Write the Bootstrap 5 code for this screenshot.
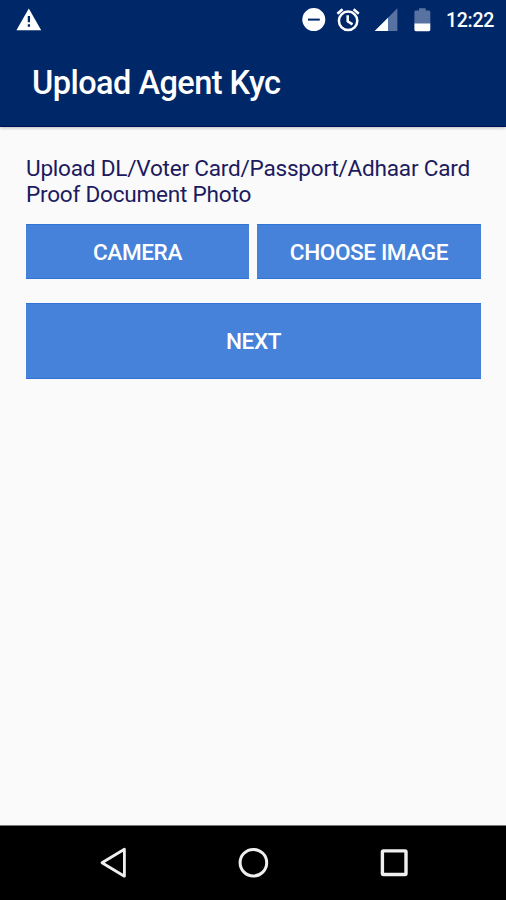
<!DOCTYPE html>
<html lang="en">
<head>
<meta charset="utf-8">
<meta name="viewport" content="width=device-width, initial-scale=1">
<title>Upload Agent Kyc</title>
<link href="https://cdn.jsdelivr.net/npm/bootstrap@5.3.0/dist/css/bootstrap.min.css" rel="stylesheet">
<style>
body { font-family: Roboto, "Liberation Sans", sans-serif; background: #fafafa; }
.screen { height: 900px; overflow: hidden; }
.app-header { background: #002868; height: 127px; border-bottom: 1px solid #00125a; box-shadow: 0 1px 3px rgba(0,0,0,.25); }
.status-bar { height: 40px; padding: 0 12px 0 16px; }
.status-bar svg, .system-nav svg { display: block; }
.clock { font-size: 19.5px; font-weight: 500; line-height: 40px; width: 48px; padding-top: 1px; letter-spacing: -.3px; white-space: nowrap; }
.app-title { font-size: 32.5px; font-weight: 500; line-height: 40px; padding: 23px 0 0 32px; letter-spacing: -.54px; white-space: nowrap; }
.content { padding: 29px 25px 0 26px; }
.prompt { color: #1d1a60; font-size: 22.6px; line-height: 26px; margin-bottom: 16px; letter-spacing: -.24px; white-space: nowrap; }
.action { background: #4682d9; color: #fff; font-size: 22.6px; font-weight: 500; line-height: 1; letter-spacing: -.42px; height: 55px; padding: 3px 0 0; border: 0; border-top: 1px solid #2f74d4; border-bottom: 1px solid #2f74d4; }
.action:hover { background: #3a74c9; color: #fff; }
.pair { gap: 8px; }
.pair .action:first-child { flex: 0 0 223px; }
.action-next { height: 76px; margin-top: 24px; }
.system-nav { height: 75px; border-top: 1px solid #777; background: #000; padding: 0 96px 0 98px; }
</style>
</head>
<body>
<div class="screen d-flex flex-column">
  <header class="app-header text-white flex-shrink-0">
    <div class="status-bar d-flex align-items-center justify-content-between">
      <svg width="26" height="40" viewBox="0 0 26 40"><path fill="#fff" d="M12.8 8.5 25.2 30.3H.4Z"/><path stroke="#002868" stroke-width="2.3" d="M12.9 16v6.2M12.9 24.3v2.5"/></svg>
      <div class="d-flex align-items-center">
        <svg width="144" height="40" viewBox="302 0 144 40" fill="none">
          <circle cx="313.8" cy="19.6" r="11.5" fill="#fff"/><path stroke="#002868" stroke-width="2" d="M308 19.6h11.8"/>
          <g stroke="#fff" stroke-width="2.5"><circle cx="348.1" cy="20.8" r="9.2"/><path d="M347.7 15.2v6.2l4.8 3M337.4 13.7l5.2-4.4M358.8 13.7l-5.2-4.4"/></g>
          <path fill="#5873a2" d="M397.4 8.3V31H374.7Z"/><path fill="#fff" d="M388 17.7V31H374.7Z"/>
          <path fill="#5873a2" d="M415.8 10.5h3.2V8.2h6.7v2.3h3.2q1.4 0 1.4 1.4V24h-15.9V11.9q0-1.4 1.4-1.4Z"/><path fill="#fff" d="M414.4 23.6h15.9v6.2q0 1.4-1.4 1.4h-13.1q-1.4 0-1.4-1.4Z"/>
        </svg>
        <span class="clock">12:22</span>
      </div>
    </div>
    <h1 class="app-title mb-0">Upload Agent Kyc</h1>
  </header>
  <main class="content flex-grow-1">
    <p class="prompt">Upload DL/Voter Card/Passport/Adhaar Card<br>Proof Document Photo</p>
    <div class="pair d-flex">
      <button type="button" class="btn action rounded-0">CAMERA</button>
      <button type="button" class="btn action rounded-0 flex-grow-1">CHOOSE IMAGE</button>
    </div>
    <button type="button" class="btn action action-next rounded-0 w-100">NEXT</button>
  </main>
  <nav class="system-nav d-flex align-items-center justify-content-between flex-shrink-0">
    <svg width="30" height="32" viewBox="0 0 30 32" fill="none" stroke="#efefef" stroke-width="2.8"><path stroke-linejoin="round" d="M26.4 2.2v27L4 15.7Z"/></svg>
    <svg width="32" height="32" viewBox="0 0 32 32" fill="none" stroke="#efefef" stroke-width="3"><circle cx="16.4" cy="15.7" r="13.3"/></svg>
    <svg width="32" height="32" viewBox="0 0 32 32" fill="none" stroke="#efefef" stroke-width="3.4"><rect x="4.4" y="3.9" width="23.6" height="23.6" rx="1"/></svg>
  </nav>
</div>
<script src="https://cdn.jsdelivr.net/npm/bootstrap@5.3.0/dist/js/bootstrap.bundle.min.js"></script>
</body>
</html>
